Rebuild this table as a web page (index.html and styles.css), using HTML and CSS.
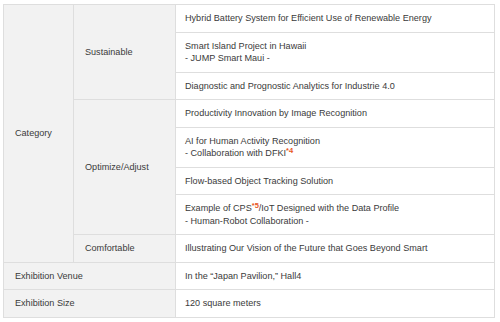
FILE: index.html
```html
<!DOCTYPE html>
<html>
<head>
<meta charset="utf-8">
<link rel="stylesheet" href="styles.css">
</head>
<body>
<div class="wrap">
<table class="spec">
  <colgroup>
    <col class="c1"><col class="c2"><col class="c3">
  </colgroup>
  <tbody>
    <tr>
      <th rowspan="8">Category</th>
      <th rowspan="3">Sustainable</th>
      <td>Hybrid Battery System for Efficient Use of Renewable Energy</td>
    </tr>
    <tr><td>Smart Island Project in Hawaii<br>- JUMP Smart Maui -</td></tr>
    <tr><td>Diagnostic and Prognostic Analytics for Industrie 4.0</td></tr>
    <tr>
      <th rowspan="4">Optimize/Adjust</th>
      <td>Productivity Innovation by Image Recognition</td>
    </tr>
    <tr><td>AI for Human Activity Recognition<br>- Collaboration with DFKI<sup class="note">*4</sup></td></tr>
    <tr><td>Flow-based Object Tracking Solution</td></tr>
    <tr><td>Example of CPS<sup class="note">*5</sup>/IoT Designed with the Data Profile<br>- Human-Robot Collaboration -</td></tr>
    <tr>
      <th>Comfortable</th>
      <td>Illustrating Our Vision of the Future that Goes Beyond Smart</td>
    </tr>
    <tr>
      <th colspan="2">Exhibition Venue</th>
      <td>In the “Japan Pavilion,” Hall4</td>
    </tr>
    <tr>
      <th colspan="2">Exhibition Size</th>
      <td>120 square meters</td>
    </tr>
  </tbody>
</table>
</div>
</body>
</html>
```
FILE: styles.css
```css
html, body {
  margin: 0;
  padding: 0;
  background: #fff;
}
.wrap {
  padding: 4px 6px 0 3px;
}
.spec {
  border-collapse: collapse;
  width: 491px;
  table-layout: fixed;
  font-family: "Liberation Sans", Arial, sans-serif;
  font-size: 9.1px;
  line-height: 12.5px;
  color: #3a3a3a;
}
.c1 { width: 70px; }
.c2 { width: 102px; }
.c3 { width: 319px; }
.spec th, .spec td {
  border: 1px solid #dedede;
  padding: 7px 10px 7px 9px;
  text-align: left;
  vertical-align: middle;
  font-weight: normal;
}
.spec th {
  background: #f2f2f2;
  padding-left: 11px;
}
.note {
  font-size: 7.5px;
  line-height: 0;
  font-weight: bold;
  color: #e8541c;
  vertical-align: 3px;
}
```
